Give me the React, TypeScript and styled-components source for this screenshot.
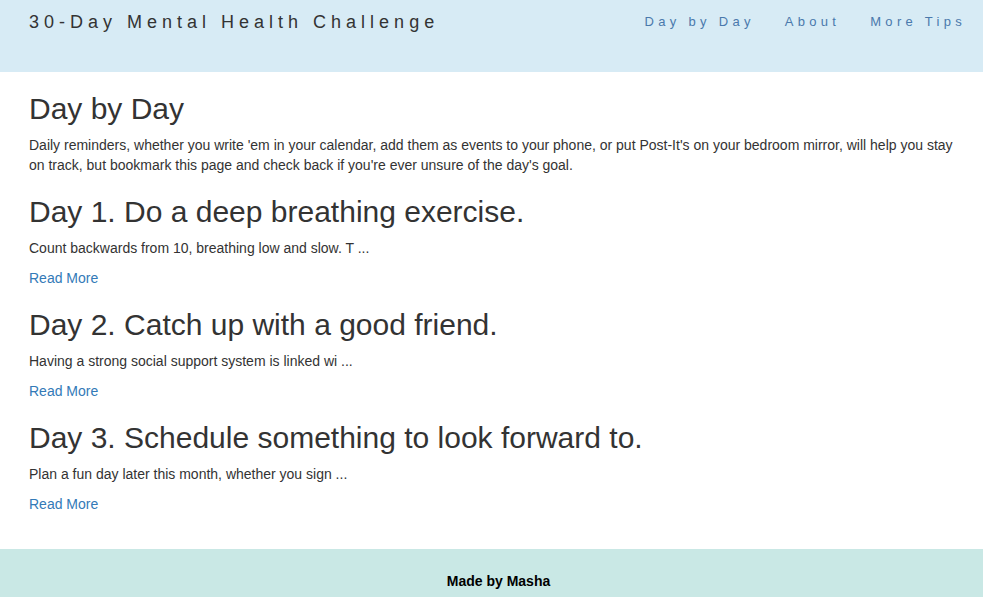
import React from "react";
import styled, { createGlobalStyle } from "styled-components";

const Global = createGlobalStyle`
  html, body { margin: 0; padding: 0; }
  body {
    font-family: "Liberation Sans", Arial, Helvetica, sans-serif;
    font-size: 14px;
    line-height: 20px;
    color: #333;
    background: #fff;
  }
`;

const Header = styled.header`
  background: #d7ebf5;
  height: 72px;
  display: flex;
  justify-content: space-between;
  align-items: flex-start;
  padding: 0 17px 0 29px;
  box-sizing: border-box;
`;

const Brand = styled.div`
  font-size: 18px;
  letter-spacing: 5px;
  line-height: 20px;
  margin-top: 12px;
  color: #333;
`;

const Nav = styled.nav`
  display: flex;
  gap: 30px;
  margin-top: 13px;
`;

const NavLink = styled.a`
  font-size: 13px;
  letter-spacing: 4.3px;
  line-height: 18px;
  color: #4a79ac;
  text-decoration: none;
`;

const Main = styled.main`
  padding: 0 29px 15px;
  display: flow-root;
`;

const Title = styled.h1`
  font-size: 30px;
  font-weight: 400;
  line-height: 33px;
  margin: 20px 0 10px;
  color: #333;
`;

const Text = styled.p`
  margin: 0 0 10px;
`;

const DayHeading = styled.h2`
  font-size: 30px;
  font-weight: 400;
  line-height: 33px;
  margin: 20px 0 10px;
  color: #333;
`;

const More = styled.a`
  color: #337ab7;
  text-decoration: none;
`;

const Footer = styled.footer`
  background: #c9e8e5;
  margin-top: 10px;
  padding: 22px 0 20px 14px;
  text-align: center;
  font-weight: 700;
  font-size: 14px;
  color: #000;
`;

const days = [
  { t: "Day 1. Do a deep breathing exercise.", p: "Count backwards from 10, breathing low and slow. T ..." },
  { t: "Day 2. Catch up with a good friend.", p: "Having a strong social support system is linked wi ..." },
  { t: "Day 3. Schedule something to look forward to.", p: "Plan a fun day later this month, whether you sign ..." },
];

export default function App() {
  return (
    <>
      <Global />
      <Header>
        <Brand>30-Day Mental Health Challenge</Brand>
        <Nav>
          <NavLink href="#">Day by Day</NavLink>
          <NavLink href="#">About</NavLink>
          <NavLink href="#">More Tips</NavLink>
        </Nav>
      </Header>
      <Main>
        <Title>Day by Day</Title>
        <Text>
          Daily reminders, whether you write 'em in your calendar, add them as events to your phone, or put Post-It's on your bedroom mirror, will help you stay on track, but bookmark this page and check back if you're ever unsure of the day's goal.
        </Text>
        {days.map((d) => (
          <React.Fragment key={d.t}>
            <DayHeading>{d.t}</DayHeading>
            <Text>{d.p}</Text>
            <Text>
              <More href="#">Read More</More>
            </Text>
          </React.Fragment>
        ))}
      </Main>
      <Footer>Made by Masha</Footer>
    </>
  );
}
